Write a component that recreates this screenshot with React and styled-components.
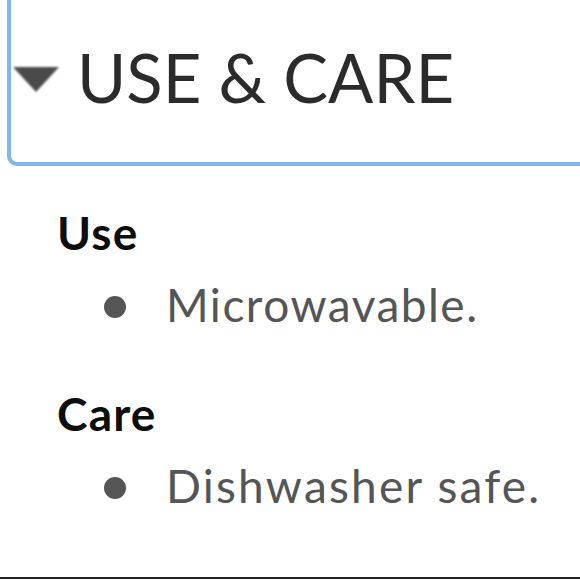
import React from 'react';
import styled, { createGlobalStyle } from 'styled-components';

const GlobalStyle = createGlobalStyle`
  html, body {
    margin: 0;
    padding: 0;
    background: #fff;
    overflow: hidden;
  }
  body {
    font-family: Lato, "Open Sans", sans-serif;
  }
`;

const Page = styled.div`
  width: 580px;
  height: 580px;
  overflow: hidden;
`;

const Summary = styled.div`
  box-sizing: border-box;
  height: 178px;
  width: 640px;
  margin: -12px 0 0 7px;
  border: 4px solid #80b6f0;
  border-radius: 10px;
  display: flex;
  align-items: center;
  gap: 18px;
  padding-left: 2px;
`;

const Caret = styled.span`
  width: 0;
  height: 0;
  border-left: 23px solid transparent;
  border-right: 23px solid transparent;
  border-top: 25px solid #4a4a4a;
  filter: blur(0.8px);
  margin-top: 4px;
`;

const Title = styled.h2`
  margin: 0;
  font-family: Lato, sans-serif;
  font-weight: 400;
  font-size: 67px;
  line-height: 1;
  color: #2b2b2b;
`;

const Details = styled.div`
  padding: 44px 0 68px 57px;
  border-bottom: 2px solid #222;
`;

const GroupTitle = styled.h3`
  margin: ${(p) => (p.first ? '0' : '63px')} 0 26px;
  font-family: Lato, sans-serif;
  font-weight: 700;
  font-size: 46px;
  line-height: 1;
  letter-spacing: 1.2px;
  color: #0d0d0d;
`;

const List = styled.ul`
  list-style: none;
  margin: 0;
  padding: 0 0 0 47px;
`;

const Item = styled.li`
  display: flex;
  align-items: center;
  gap: 40px;
  font-size: 46px;
  line-height: 1;
  letter-spacing: ${(p) => p.spacing}px;
  color: #555;
`;

const Bullet = styled.span`
  width: 22px;
  height: 22px;
  border-radius: 50%;
  background: #555;
  flex-shrink: 0;
  margin-top: 4px;
`;

const groups = [
  { title: 'Use', items: ['Microwavable.'] },
  { title: 'Care', items: ['Dishwasher safe.'] },
];

export default function App() {
  return (
    <Page>
      <GlobalStyle />
      <Summary>
        <Caret />
        <Title>USE &amp; CARE</Title>
      </Summary>
      <Details>
        {groups.map((g, i) => (
          <div key={g.title}>
            <GroupTitle first={i === 0}>{g.title}</GroupTitle>
            <List>
              {g.items.map((it) => (
                <Item key={it} spacing={it.length > 14 ? 2.2 : 1.5}>
                  <Bullet />
                  {it}
                </Item>
              ))}
            </List>
          </div>
        ))}
      </Details>
    </Page>
  );
}
